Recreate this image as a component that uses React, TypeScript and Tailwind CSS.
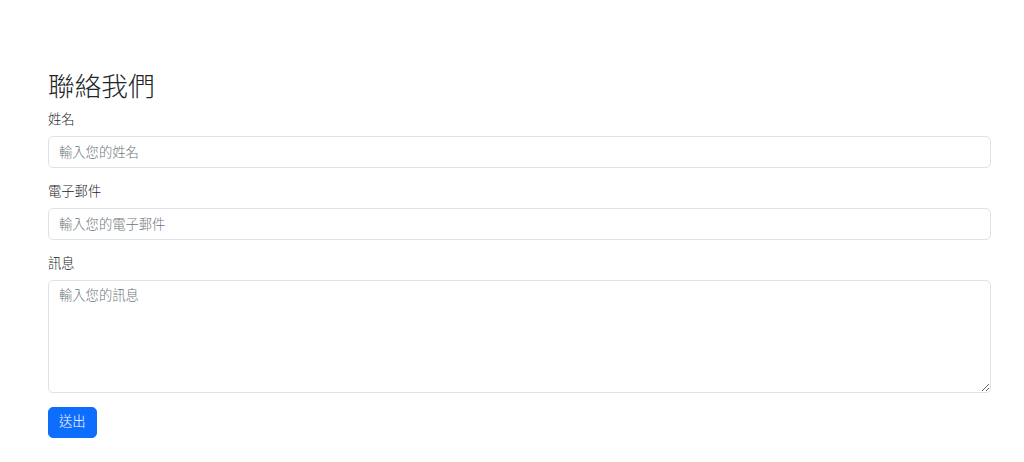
export default function App() {
  const font = { fontFamily: '"Liberation Sans", "Noto Sans CJK TC", sans-serif' };
  return (
    <div
      className="min-h-[462px] bg-white pl-[48px] pt-[71px] text-[#212529]"
      style={font}
    >
      <form className="w-[943px]" onSubmit={(e) => e.preventDefault()}>
        <h2 className="mb-[6.7px] text-[26.7px] font-light leading-[32px]">聯絡我們</h2>

        <div className="mb-[13.3px]">
          <label className="mb-[6.7px] block text-[13.3px] font-light leading-[20px]">姓名</label>
          <input
            type="text"
            placeholder="輸入您的姓名"
            className="block h-[32px] w-full rounded-[5px] border border-[#dee2e6] bg-white px-[10px] text-[13.3px] font-light leading-[20px] text-[#212529] outline-none placeholder:text-[#6c757d]"
          />
        </div>

        <div className="mb-[13.3px]">
          <label className="mb-[6.7px] block text-[13.3px] font-light leading-[20px]">電子郵件</label>
          <input
            type="email"
            placeholder="輸入您的電子郵件"
            className="block h-[32px] w-full rounded-[5px] border border-[#dee2e6] bg-white px-[10px] text-[13.3px] font-light leading-[20px] text-[#212529] outline-none placeholder:text-[#6c757d]"
          />
        </div>

        <div className="mb-[13.3px]">
          <label className="mb-[6.7px] block text-[13.3px] font-light leading-[20px]">訊息</label>
          <textarea
            rows={5}
            placeholder="輸入您的訊息"
            className="block h-[113px] w-full rounded-[5px] border border-[#dee2e6] bg-white px-[10px] py-[5px] text-[13.3px] font-light leading-[20px] text-[#212529] outline-none placeholder:text-[#6c757d]"
          />
        </div>

        <button
          type="submit"
          className="h-[31px] rounded-[5px] border border-[#0d6efd] bg-[#0d6efd] px-[10px] text-[13.3px] font-light leading-[20px] text-white"
        >
          送出
        </button>
      </form>
    </div>
  );
}
